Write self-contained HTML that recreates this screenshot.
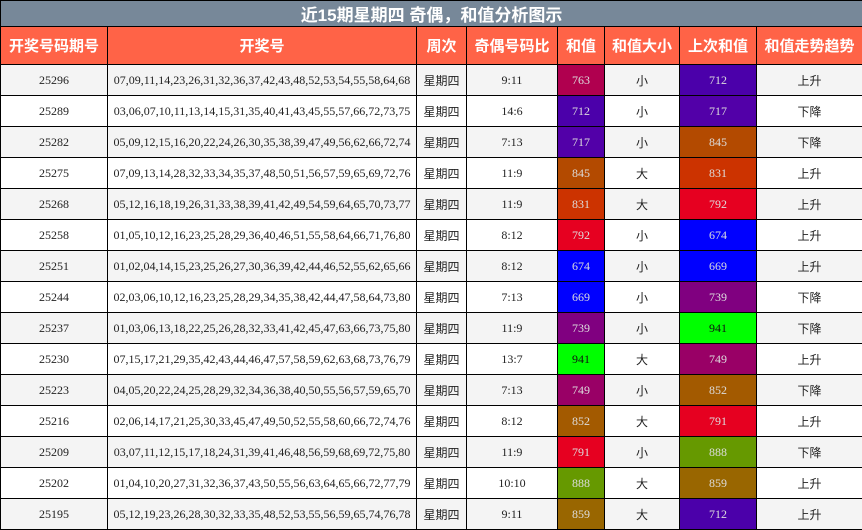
<!DOCTYPE html>
<html><head><meta charset="utf-8"><style>
html,body{margin:0;padding:0;background:#fff;}
table{border-collapse:collapse;table-layout:fixed;width:862px;}
td{border:1px solid #000;padding:0;text-align:center;font-family:"Liberation Serif","Noto Serif CJK SC",serif;font-size:12px;color:#222;white-space:nowrap;overflow:hidden;}
tr.t td{background:#778899;color:#fff;font-family:"Liberation Sans","Noto Sans CJK SC",sans-serif;font-weight:bold;font-size:17px;height:25px;}
tr.h td{background:#ff6347;color:#fff;font-family:"Liberation Sans","Noto Sans CJK SC",sans-serif;font-weight:bold;font-size:15px;height:37px;}
tr.r td{height:30px;}
tr.r:nth-child(odd) td{background:#f4f4f4;}
tr.r:nth-child(even) td{background:#fff;}
td.c{color:#ddd !important;}
.cj{font-family:"Liberation Sans","Noto Sans CJK SC",sans-serif;font-size:12px;}
</style></head><body>
<table>
<colgroup><col style="width:107px"><col style="width:309px"><col style="width:50px"><col style="width:91px"><col style="width:47px"><col style="width:75px"><col style="width:77px"><col style="width:106px"></colgroup>
<tr class="t"><td colspan="8">近15期星期四 奇偶，和值分析图示</td></tr>
<tr class="h"><td>开奖号码期号</td><td>开奖号</td><td>周次</td><td>奇偶号码比</td><td>和值</td><td>和值大小</td><td>上次和值</td><td>和值走势趋势</td></tr>
<tr class="r"><td>25296</td><td>07,09,11,14,23,26,31,32,36,37,42,43,48,52,53,54,55,58,64,68</td><td class="cj">星期四</td><td>9:11</td><td class="c" style="background:#b0004f">763</td><td class="cj">小</td><td class="c" style="background:#4b00aa">712</td><td class="cj">上升</td></tr>
<tr class="r"><td>25289</td><td>03,06,07,10,11,13,14,15,31,35,40,41,43,45,55,57,66,72,73,75</td><td class="cj">星期四</td><td>14:6</td><td class="c" style="background:#4b00aa">712</td><td class="cj">小</td><td class="c" style="background:#5200a8">717</td><td class="cj">下降</td></tr>
<tr class="r"><td>25282</td><td>05,09,12,15,16,20,22,24,26,30,35,38,39,47,49,56,62,66,72,74</td><td class="cj">星期四</td><td>7:13</td><td class="c" style="background:#5200a8">717</td><td class="cj">小</td><td class="c" style="background:#b34a00">845</td><td class="cj">下降</td></tr>
<tr class="r"><td>25275</td><td>07,09,13,14,28,32,33,34,35,37,48,50,51,56,57,59,65,69,72,76</td><td class="cj">星期四</td><td>11:9</td><td class="c" style="background:#b34a00">845</td><td class="cj">大</td><td class="c" style="background:#cc3300">831</td><td class="cj">上升</td></tr>
<tr class="r"><td>25268</td><td>05,12,16,18,19,26,31,33,38,39,41,42,49,54,59,64,65,70,73,77</td><td class="cj">星期四</td><td>11:9</td><td class="c" style="background:#cc3300">831</td><td class="cj">大</td><td class="c" style="background:#e60020">792</td><td class="cj">上升</td></tr>
<tr class="r"><td>25258</td><td>01,05,10,12,16,23,25,28,29,36,40,46,51,55,58,64,66,71,76,80</td><td class="cj">星期四</td><td>8:12</td><td class="c" style="background:#e60020">792</td><td class="cj">小</td><td class="c" style="background:#0000ff">674</td><td class="cj">上升</td></tr>
<tr class="r"><td>25251</td><td>01,02,04,14,15,23,25,26,27,30,36,39,42,44,46,52,55,62,65,66</td><td class="cj">星期四</td><td>8:12</td><td class="c" style="background:#0000ff">674</td><td class="cj">小</td><td class="c" style="background:#0000ff">669</td><td class="cj">上升</td></tr>
<tr class="r"><td>25244</td><td>02,03,06,10,12,16,23,25,28,29,34,35,38,42,44,47,58,64,73,80</td><td class="cj">星期四</td><td>7:13</td><td class="c" style="background:#0000ff">669</td><td class="cj">小</td><td class="c" style="background:#800080">739</td><td class="cj">下降</td></tr>
<tr class="r"><td>25237</td><td>01,03,06,13,18,22,25,26,28,32,33,41,42,45,47,63,66,73,75,80</td><td class="cj">星期四</td><td>11:9</td><td class="c" style="background:#800080">739</td><td class="cj">小</td><td style="background:#00ff00;color:#111">941</td><td class="cj">下降</td></tr>
<tr class="r"><td>25230</td><td>07,15,17,21,29,35,42,43,44,46,47,57,58,59,62,63,68,73,76,79</td><td class="cj">星期四</td><td>13:7</td><td style="background:#00ff00;color:#111">941</td><td class="cj">大</td><td class="c" style="background:#990066">749</td><td class="cj">上升</td></tr>
<tr class="r"><td>25223</td><td>04,05,20,22,24,25,28,29,32,34,36,38,40,50,55,56,57,59,65,70</td><td class="cj">星期四</td><td>7:13</td><td class="c" style="background:#990066">749</td><td class="cj">小</td><td class="c" style="background:#a35a00">852</td><td class="cj">下降</td></tr>
<tr class="r"><td>25216</td><td>02,06,14,17,21,25,30,33,45,47,49,50,52,55,58,60,66,72,74,76</td><td class="cj">星期四</td><td>8:12</td><td class="c" style="background:#a35a00">852</td><td class="cj">大</td><td class="c" style="background:#e60020">791</td><td class="cj">上升</td></tr>
<tr class="r"><td>25209</td><td>03,07,11,12,15,17,18,24,31,39,41,46,48,56,59,68,69,72,75,80</td><td class="cj">星期四</td><td>11:9</td><td class="c" style="background:#e60020">791</td><td class="cj">小</td><td class="c" style="background:#669900">888</td><td class="cj">下降</td></tr>
<tr class="r"><td>25202</td><td>01,04,10,20,27,31,32,36,37,43,50,55,56,63,64,65,66,72,77,79</td><td class="cj">星期四</td><td>10:10</td><td class="c" style="background:#669900">888</td><td class="cj">大</td><td class="c" style="background:#996600">859</td><td class="cj">上升</td></tr>
<tr class="r"><td>25195</td><td>05,12,19,23,26,28,30,32,33,35,48,52,53,55,56,59,65,74,76,78</td><td class="cj">星期四</td><td>9:11</td><td class="c" style="background:#996600">859</td><td class="cj">大</td><td class="c" style="background:#4b00aa">712</td><td class="cj">上升</td></tr>
</table>
</body></html>
